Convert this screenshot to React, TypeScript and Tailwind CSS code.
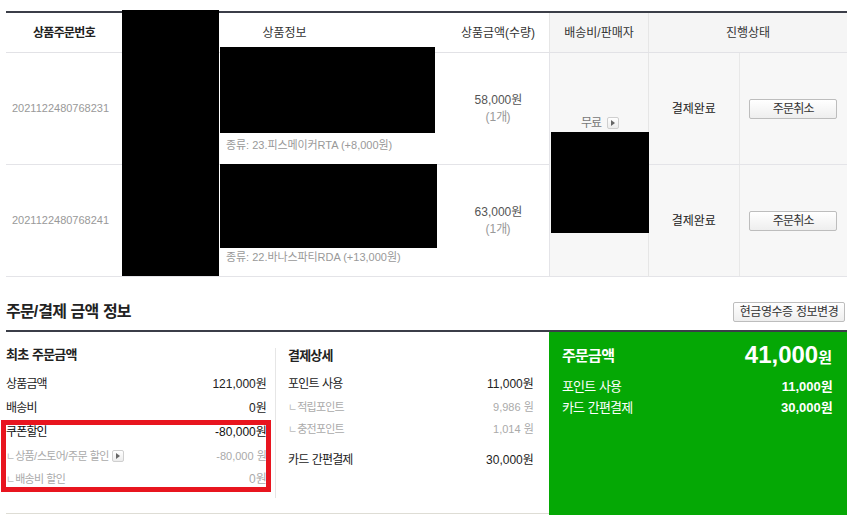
import React from "react";

const HANGUL = /([\u1100-\u11FF\u3130-\u318F\uAC00-\uD7AF]+)/;

function K({ t, c = "tracking-[-0.07em]" }: { t: string; c?: string }) {
  const parts = t.split(HANGUL);
  return (
    <span>
      {parts.map((p, i) =>
        i % 2 === 1 ? (
          <span key={i} className={c}>
            {p}
          </span>
        ) : (
          <React.Fragment key={i}>{p}</React.Fragment>
        )
      )}
    </span>
  );
}

function MiniBtn() {
  return (
    <span className="inline-flex h-[12px] w-[12px] items-center justify-center rounded-[2px] border border-[#cfcfcf] bg-gradient-to-b from-white to-[#ececec] align-middle">
      <svg width="4" height="6" viewBox="0 0 4 6">
        <path d="M0 0 L4 3 L0 6 Z" fill="#666" />
      </svg>
    </span>
  );
}

function CancelBtn() {
  return (
    <button className="h-[20px] w-[88px] rounded-[2px] border border-[#bdbdbd] bg-gradient-to-b from-white to-[#eeeeee] text-[12px] leading-[18px] text-[#333]">
      <K t="주문취소" />
    </button>
  );
}

function ItemRow({ no, opt, price }: { no: string; opt: string; price: string }) {
  return (
    <div className="flex h-[112px] border-b border-[#e4e4e8]">
      <div className="flex w-[116px] items-center pl-[6px] text-[11px] text-[#999]">{no}</div>
      <div className="flex w-[325px] flex-col justify-end pb-[11px] pl-[104px] text-[11px] leading-[16px] text-[#999]">
        <div>
          <K t={opt} c="tracking-[-0.01em]" />
        </div>
      </div>
      <div className="flex w-[102px] flex-col items-center justify-center text-[12px] leading-[17px]">
        <span className="text-[#555]">
          <K t={price} />
        </span>
        <span className="text-[#999]">
          <K t="(1개)" />
        </span>
      </div>
    </div>
  );
}

function StatusRow() {
  return (
    <div className="flex h-[112px] border-b border-[#e4e4e8]">
      <div className="flex w-[90px] items-center justify-center text-[12px] text-[#222]">결제완료</div>
      <div className="flex w-[109px] items-center justify-center border-l border-[#e8e8e8]">
        <CancelBtn />
      </div>
    </div>
  );
}

function Line({
  label,
  value,
  cls,
  h = "h-[24px]",
}: {
  label: React.ReactNode;
  value: string;
  cls: string;
  h?: string;
}) {
  return (
    <div className={`flex items-center justify-between ${h} ${cls}`}>
      <span>{label}</span>
      <span>
        <K t={value} />
      </span>
    </div>
  );
}

function Sub({ t, small = false }: { t: string; small?: boolean }) {
  return (
    <span className={small ? "text-[11px]" : ""}>
      <span className="text-[10px] text-[#bbb]">ㄴ</span>
      <K t={t} />
    </span>
  );
}

export default function App() {
  return (
    <div className="relative h-[515px] w-[847px] overflow-hidden bg-white font-['Liberation_Sans','Noto_Sans_CJK_KR',sans-serif]">
      {/* order table */}
      <div className="ml-[6px] mt-[11px] w-[841px] border-t-2 border-[#3b3e48]">
        <div className="flex h-[40px] border-b border-[#e2e2e6] text-[12px] text-[#333]">
          <div className="flex w-[116px] items-center justify-center font-bold text-[#222]">
            <K t="상품주문번호" c="tracking-[-0.06em]" />
          </div>
          <div className="flex w-[325px] items-center justify-center">상품정보</div>
          <div className="flex w-[102px] items-center justify-center">상품금액(수량)</div>
          <div className="flex w-[99px] items-center justify-center border-l border-[#e6e6e6] bg-[#f5f5f5]">배송비/판매자</div>
          <div className="flex w-[199px] items-center justify-center border-l border-[#e6e6e6] bg-[#f5f5f5]">진행상태</div>
        </div>
        <div className="flex">
          <div className="flex w-[543px] flex-col">
            <ItemRow no="2021122480768231" opt="종류: 23.피스메이커RTA (+8,000원)" price="58,000원" />
            <ItemRow no="2021122480768241" opt="종류: 22.바나스파티RDA (+13,000원)" price="63,000원" />
          </div>
          <div className="flex w-[99px] flex-col items-center border-b border-l border-[#e4e4e8] bg-[#f7f7f7] pt-[62px]">
            <div className="flex items-center gap-[6px] pl-[2px] text-[12px] leading-[16px] text-[#777]">
              <K t="무료" c="tracking-[-0.08em]" />
              <MiniBtn />
            </div>
          </div>
          <div className="flex w-[199px] flex-col border-l border-[#e6e6e6] bg-[#f7f7f7]">
            <StatusRow />
            <StatusRow />
          </div>
        </div>
      </div>

      {/* payment info */}
      <div className="ml-[6px] w-[841px]">
        <div className="flex items-center justify-between pb-[8px] pt-[25px]">
          <h2 className="text-[16px] font-bold leading-[20px] text-[#222]">
            <K t="주문/결제 금액 정보" c="tracking-[-0.05em]" />
          </h2>
          <button className="mr-[2px] h-[20px] w-[112px] rounded-[2px] border border-[#bdbdbd] bg-gradient-to-b from-white to-[#eeeeee] text-[12px] leading-[18px] text-[#333]">
            <K t="현금영수증 정보변경" c="tracking-[-0.04em]" />
          </button>
        </div>
        <div className="flex h-[185px] border-t-2 border-[#3b3e48]">
          <div className="flex h-[182px] w-[543px] border-b border-[#deddd5]">
            {/* initial amount */}
            <div className="flex w-[269px] flex-col pr-[9px] pt-[15px] text-[12px]">
              <div className="mb-[9px] text-[13px] font-bold leading-[16px] text-[#222]">
                <K t="최초 주문금액" c="tracking-[-0.06em]" />
              </div>
              <Line label={<K t="상품금액" />} value="121,000원" cls="text-[#222]" />
              <Line label={<K t="배송비" />} value="0원" cls="text-[#222]" />
              <Line label={<K t="쿠폰할인" />} value="-80,000원" cls="text-[#111]" />
              <div className="flex h-[24px] items-center justify-between text-[#aaa]">
                <span className="flex items-center gap-[3px]">
                  <Sub t="상품/스토어/주문 할인" small />
                  <MiniBtn />
                </span>
                <span className="text-[11px]">
                  <K t="-80,000 원" />
                </span>
              </div>
              <Line label={<Sub t="배송비 할인" small />} value="0원" cls="text-[#aaa]" h="h-[22px]" />
            </div>
            {/* payment detail */}
            <div className="mt-[16px] flex h-[150px] w-[274px] flex-col border-l border-[#e6e6e6] pl-[12px] pr-[16px] text-[12px]">
              <div className="mb-[8px] text-[13px] font-bold leading-[16px] text-[#222]">
                <K t="결제상세" c="tracking-[-0.06em]" />
              </div>
              <Line label={<K t="포인트 사용" />} value="11,000원" cls="text-[#222]" />
              <Line label={<Sub t="적립포인트" />} value="9,986 원" cls="text-[11px] text-[#aaa]" h="h-[22px]" />
              <Line label={<Sub t="충전포인트" />} value="1,014 원" cls="text-[11px] text-[#aaa]" h="h-[22px]" />
              <div className="mt-[8px]">
                <Line label={<K t="카드 간편결제" />} value="30,000원" cls="text-[#222]" />
              </div>
            </div>
          </div>
          {/* green summary */}
          <div className="flex w-[298px] flex-col bg-[#05a805] pl-[13px] pr-[15px] pt-[12px] text-white">
            <div className="flex h-[24px] items-center justify-between">
              <span className="text-[15px] font-bold">
                <K t="주문금액" c="tracking-[-0.05em]" />
              </span>
              <span className="flex items-baseline font-bold">
                <span className="text-[24px] leading-[24px]">41,000</span>
                <span className="text-[15px]">원</span>
              </span>
            </div>
            <div className="mt-[8px] flex h-[21px] items-center justify-between text-[13px]">
              <K t="포인트 사용" c="tracking-[-0.065em]" />
              <span className="font-bold">
                <K t="11,000원" c="tracking-[-0.06em]" />
              </span>
            </div>
            <div className="flex h-[21px] items-center justify-between text-[13px]">
              <K t="카드 간편결제" c="tracking-[-0.065em]" />
              <span className="font-bold">
                <K t="30,000원" c="tracking-[-0.06em]" />
              </span>
            </div>
          </div>
        </div>
      </div>

      {/* redaction overlays */}
      <div className="absolute left-[122px] top-[10px] h-[266px] w-[97px] bg-black" />
      <div className="absolute left-[220px] top-[47px] h-[86px] w-[215px] bg-black" />
      <div className="absolute left-[220px] top-[164px] h-[84px] w-[217px] bg-black" />
      <div className="absolute left-[551px] top-[132px] h-[101px] w-[98px] bg-black" />

      {/* red annotation box */}
      <div className="absolute left-[1px] top-[420px] h-[72px] w-[270px] border-[5px] border-[#e8151f]" />
    </div>
  );
}
